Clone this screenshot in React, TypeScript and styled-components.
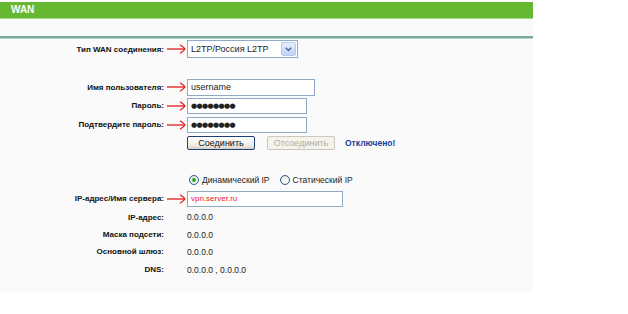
import React from "react";
import styled, { createGlobalStyle } from "styled-components";

const GlobalStyle = createGlobalStyle`
  html, body {
    margin: 0;
    padding: 0;
    background: #ffffff;
  }
  body {
    font-family: "Liberation Sans", Arial, sans-serif;
    color: #1a1a1a;
  }
`;

const Page = styled.div`
  width: 533px;
  padding-top: 2px;
`;

const Header = styled.div`
  height: 16px;
  background: #66b833;
  border-bottom: 1px solid #a9d98a;
  color: #ffffff;
  font-weight: bold;
  font-size: 10px;
  line-height: 16px;
  padding-left: 11px;
`;

const Panel = styled.div`
  background: #fafafa;
  padding-bottom: 13px;
`;

const SubBar = styled.div`
  height: 17px;
  border-bottom: 2px solid #79aa98;
  box-shadow: 0 1px 0 #b9d6cb;
`;

const Row = styled.div<{ $h: number; $top?: number }>`
  display: grid;
  grid-template-columns: 164px 23px 1fr;
  align-items: center;
  height: ${(p) => p.$h}px;
  margin-top: ${(p) => p.$top ?? 0}px;
`;

const Label = styled.div`
  text-align: right;
  font-weight: bold;
  font-size: 8px;
  color: #111;
  white-space: nowrap;
`;

const Field = styled.div`
  display: flex;
  align-items: center;
  gap: 10px;
`;

const Value = styled.span`
  font-size: 8.5px;
  color: #222;
`;

const TextBox = styled.div<{ $w: number; $h?: number; $red?: boolean; $dots?: boolean }>`
  box-sizing: border-box;
  width: ${(p) => p.$w}px;
  height: ${(p) => p.$h ?? 16}px;
  border: 1px solid #8fa9c6;
  background: #ffffff;
  display: flex;
  align-items: center;
  padding-left: 3px;
  font-size: ${(p) => (p.$dots ? "7px" : p.$red ? "8px" : "9px")};
  letter-spacing: ${(p) => (p.$dots ? "-0.6px" : "0")};
  color: ${(p) => (p.$red ? "#e8201c" : "#222")};
  font-family: ${(p) => (p.$dots ? '"DejaVu Sans", sans-serif' : "inherit")};
`;

const SelectBox = styled.div`
  box-sizing: border-box;
  width: 111px;
  height: 18px;
  border: 1px solid #8fa9c6;
  background: #ffffff;
  display: flex;
  align-items: center;
  justify-content: space-between;
  padding: 1px 1px 1px 3px;
  font-size: 9px;
  color: #222;
`;

const DropButton = styled.div`
  box-sizing: border-box;
  width: 15px;
  height: 14px;
  border: 1px solid #b7c9ee;
  border-radius: 2px;
  background: linear-gradient(#e6eefc, #c1d3fb);
  display: flex;
  align-items: center;
  justify-content: center;
`;

const Button = styled.div<{ $disabled?: boolean }>`
  box-sizing: border-box;
  width: 68px;
  height: 14px;
  border: 1px solid ${(p) => (p.$disabled ? "#cac8bb" : "#1d3f72")};
  border-radius: 2px;
  background: ${(p) =>
    p.$disabled ? "#f4f3ec" : "linear-gradient(#ffffff, #ecebe6 70%, #d6d0c5)"};
  color: ${(p) => (p.$disabled ? "#b2ae9f" : "#111")};
  font-size: 9px;
  display: flex;
  align-items: center;
  justify-content: center;
`;

const Status = styled.span`
  color: #1b3e96;
  font-weight: bold;
  font-size: 8.5px;
`;

const RadioGroup = styled.div`
  display: flex;
  align-items: center;
  padding-left: 2px;
`;

const RadioItem = styled.label`
  display: flex;
  align-items: center;
  gap: 3px;
  font-size: 8.5px;
  color: #222;
  margin-right: 10px;
`;

const RadioCircle = styled.span<{ $checked?: boolean }>`
  box-sizing: border-box;
  width: 10px;
  height: 10px;
  border-radius: 50%;
  border: 1px solid #2a5c8c;
  background: radial-gradient(circle at 60% 65%, #ffffff, #dcdcd4);
  display: flex;
  align-items: center;
  justify-content: center;
  &::after {
    content: "";
    display: ${(p) => (p.$checked ? "block" : "none")};
    width: 4px;
    height: 4px;
    border-radius: 50%;
    background: #2aa52a;
  }
`;

const ArrowCell = styled.div`
  display: flex;
  align-items: center;
  padding-left: 3px;
`;

const Arrow: React.FC = () => (
  <ArrowCell>
    <svg width="19" height="10" viewBox="0 0 19 10">
      <path d="M0 5 H17.5" stroke="#e41b17" strokeWidth="1.3" fill="none" />
      <path
        d="M13 0.8 C15.5 2.5 17.2 3.8 18 5 C17.2 6.2 15.5 7.5 13 9.2"
        stroke="#e41b17"
        strokeWidth="1.3"
        fill="none"
      />
    </svg>
  </ArrowCell>
);

const Chevron: React.FC = () => (
  <svg width="7" height="5" viewBox="0 0 7 5">
    <path d="M0.8 0.8 L3.5 3.6 L6.2 0.8" stroke="#4d6185" strokeWidth="1.4" fill="none" />
  </svg>
);

const InfoRow: React.FC<{ label: string; value: string; h: number }> = ({ label, value, h }) => (
  <Row $h={h}>
    <Label>{label}</Label>
    <div />
    <Field>
      <Value>{value}</Value>
    </Field>
  </Row>
);

export default function App() {
  return (
    <>
      <GlobalStyle />
      <Page>
        <Header>WAN</Header>
        <Panel>
          <SubBar />

          <Row $h={20} $top={1}>
            <Label>Тип WAN соединения:</Label>
            <Arrow />
            <Field>
              <SelectBox>
                <span>L2TP/Россия L2TP</span>
                <DropButton>
                  <Chevron />
                </DropButton>
              </SelectBox>
            </Field>
          </Row>

          <Row $h={18} $top={19}>
            <Label>Имя пользователя:</Label>
            <Arrow />
            <Field>
              <TextBox $w={128} $h={17}>username</TextBox>
            </Field>
          </Row>
          <Row $h={19}>
            <Label>Пароль:</Label>
            <Arrow />
            <Field>
              <TextBox $w={120} $dots>●●●●●●●●</TextBox>
            </Field>
          </Row>
          <Row $h={19}>
            <Label>Подтвердите пароль:</Label>
            <Arrow />
            <Field>
              <TextBox $w={120} $dots>●●●●●●●●</TextBox>
            </Field>
          </Row>
          <Row $h={18}>
            <div />
            <div />
            <Field>
              <Button>Соединить</Button>
              <Button $disabled style={{ marginLeft: 2 }}>Отсоединить</Button>
              <Status>Отключено!</Status>
            </Field>
          </Row>

          <Row $h={18} $top={19}>
            <div />
            <div />
            <RadioGroup>
              <RadioItem>
                <RadioCircle $checked />
                Динамический IP
              </RadioItem>
              <RadioItem>
                <RadioCircle />
                Статический IP
              </RadioItem>
            </RadioGroup>
          </Row>
          <Row $h={19}>
            <Label>IP-адрес/Имя сервера:</Label>
            <Arrow />
            <Field>
              <TextBox $w={156} $red>vpn.server.ru</TextBox>
            </Field>
          </Row>

          <InfoRow label="IP-адрес:" value="0.0.0.0" h={18} />
          <InfoRow label="Маска подсети:" value="0.0.0.0" h={17} />
          <InfoRow label="Основной шлюз:" value="0.0.0.0" h={17} />
          <InfoRow label="DNS:" value="0.0.0.0 , 0.0.0.0" h={19} />
        </Panel>
      </Page>
    </>
  );
}
